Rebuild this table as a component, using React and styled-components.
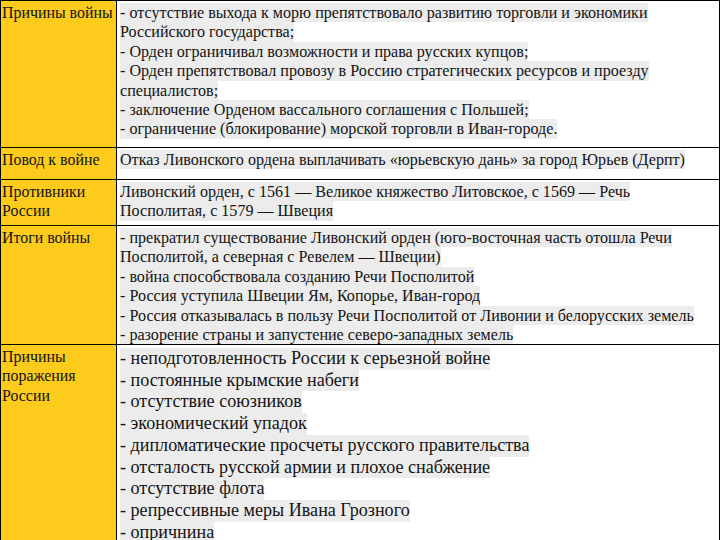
import React from "react";
import styled, { createGlobalStyle } from "styled-components";

const Global = createGlobalStyle`
  html, body {
    margin: 0;
    padding: 0;
    background: #ffffff;
  }
`;

const Table = styled.div`
  width: 720px;
  height: 540px;
  overflow: hidden;
  border-top: 1px solid #000;
  border-left: 1px solid #000;
  box-sizing: border-box;
  display: flex;
  flex-direction: column;
  font-family: "Liberation Serif", "Times New Roman", serif;
  color: #141414;
`;

const Row = styled.div`
  display: grid;
  grid-template-columns: 116px 1fr;
  height: ${(p) => (p.$h ? `${p.$h}px` : "auto")};
  flex: ${(p) => (p.$h ? "none" : "1")};
  border-bottom: ${(p) => (p.$last ? "none" : "1px solid #000")};
  box-sizing: border-box;
`;

const Label = styled.div`
  background: #fccb1c;
  border-right: 1px solid #000;
  padding: 2px 0 0 1px;
  font-size: 15.9px;
  line-height: 19.4px;
`;

const Content = styled.div`
  border-right: 1px solid #000;
  padding: ${(p) => (p.$big ? "3px 0 0 3px" : "2px 0 0 3px")};
  font-size: ${(p) => (p.$big ? "18.1px" : "16.1px")};
  line-height: ${(p) => (p.$big ? "21.7px" : "19.4px")};
  display: flex;
  flex-direction: column;
  align-items: flex-start;
`;

const Line = styled.span`
  background: #ececec;
  white-space: nowrap;
`;

const rows = [
  {
    label: ["Причины войны"],
    h: 147,
    lines: [
      "- отсутствие выхода к морю препятствовало развитию торговли и экономики",
      "Российского государства;",
      "- Орден ограничивал возможности и права русских купцов;",
      "- Орден препятствовал провозу в Россию стратегических ресурсов и проезду",
      "специалистов;",
      "- заключение Орденом вассального соглашения с Польшей;",
      "- ограничение (блокирование) морской торговли в Иван-городе.",
    ],
  },
  {
    label: ["Повод к войне"],
    h: 32,
    lines: [
      "Отказ Ливонского ордена выплачивать «юрьевскую дань» за город Юрьев (Дерпт)",
    ],
  },
  {
    label: ["Противники", "России"],
    h: 46,
    lines: [
      "Ливонский орден, с 1561 — Великое княжество Литовское, с 1569 — Речь",
      "Посполитая, с 1579 — Швеция",
    ],
  },
  {
    label: ["Итоги войны"],
    h: 119,
    lines: [
      "- прекратил существование Ливонский орден (юго-восточная часть отошла Речи",
      "Посполитой, а северная с Ревелем — Швеции)",
      "- война способствовала созданию Речи Посполитой",
      "- Россия уступила Швеции Ям, Копорье, Иван-город",
      "- Россия отказывалась в пользу Речи Посполитой от Ливонии и белорусских земель",
      "- разорение страны и запустение северо-западных земель",
    ],
  },
  {
    label: ["Причины", "поражения", "России"],
    big: true,
    last: true,
    lines: [
      "- неподготовленность России к серьезной войне",
      "- постоянные крымские набеги",
      "- отсутствие союзников",
      "- экономический упадок",
      "- дипломатические просчеты русского правительства",
      "- отсталость русской армии и плохое снабжение",
      "- отсутствие флота",
      "- репрессивные меры Ивана Грозного",
      "- опричнина",
    ],
  },
];

export default function App() {
  return (
    <>
      <Global />
      <Table>
        {rows.map((r, i) => (
          <Row key={i} $h={r.h} $last={r.last}>
            <Label>
              {r.label.map((t, j) => (
                <div key={j}>{t}</div>
              ))}
            </Label>
            <Content $big={r.big}>
              {r.lines.map((t, j) => (
                <Line key={j}>{t}</Line>
              ))}
            </Content>
          </Row>
        ))}
      </Table>
    </>
  );
}
